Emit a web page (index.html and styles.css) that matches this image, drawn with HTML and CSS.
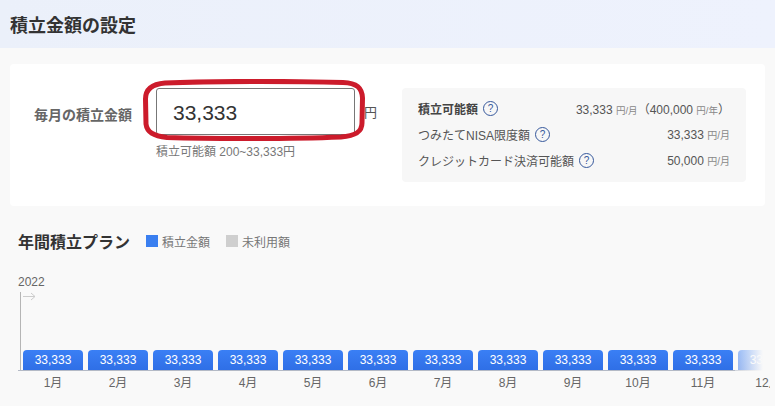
FILE: index.html
```html
<!DOCTYPE html>
<html lang="ja">
<head>
  <meta charset="UTF-8" />
  <title>積立金額の設定</title>
  <link rel="stylesheet" href="styles.css">
</head>
<body>

<header class="page-head">
  <h1>積立金額の設定</h1>
</header>

<section class="card">
  <div class="amount-label">毎月の積立金額</div>

  <div class="amount-field">
    <div class="input-row">
      <input class="amount-input" type="text" value="33,333" />
      <span class="yen">円</span>
    </div>
    <div class="hint">積立可能額 200~33,333円</div>
    <svg class="red-mark" width="226" height="68" viewBox="0 0 226 68">
      <path d="M24 4 C70 2 150 2 202 3.500 C216 4 221 9 221.500 19 L221 44 C221 53 214 57 200 58 C150 60 70 60 26 58.500 C12 57 6 53 5 45 L4.500 20 C4.500 10 12 5 24 4 Z" />
    </svg>
  </div>

  <div class="limits">
    <div class="limit-row limit-main">
      <div class="limit-name"><b>積立可能額</b><span class="help">?</span></div>
      <div class="limit-value value-main">33,333 <small>円/月</small>（400,000 <small>円/年</small>）</div>
    </div>
    <div class="limit-row">
      <div class="limit-name">つみたてNISA限度額<span class="help">?</span></div>
      <div class="limit-value">33,333 <small>円/月</small></div>
    </div>
    <div class="limit-row">
      <div class="limit-name">クレジットカード決済可能額<span class="help">?</span></div>
      <div class="limit-value">50,000 <small>円/月</small></div>
    </div>
  </div>
</section>

<section class="plan">
  <div class="plan-head">
    <h2>年間積立プラン</h2>
    <span class="legend"><i class="swatch swatch-blue"></i>積立金額</span>
    <span class="legend"><i class="swatch swatch-gray"></i>未利用額</span>
  </div>

  <div class="year">2022</div>

  <div class="chart">
    <svg class="arrow" width="13" height="9" viewBox="0 0 13 9">
      <path d="M0 4.500 H12 M8 1 L12 4.500 L8 8" />
    </svg>
    <div class="bars">
      <div class="bar">33,333</div>
      <div class="bar">33,333</div>
      <div class="bar">33,333</div>
      <div class="bar">33,333</div>
      <div class="bar">33,333</div>
      <div class="bar">33,333</div>
      <div class="bar">33,333</div>
      <div class="bar">33,333</div>
      <div class="bar">33,333</div>
      <div class="bar">33,333</div>
      <div class="bar">33,333</div>
      <div class="bar">33,333</div>
    </div>
    <div class="months">
      <div>1月</div>
      <div>2月</div>
      <div>3月</div>
      <div>4月</div>
      <div>5月</div>
      <div>6月</div>
      <div>7月</div>
      <div>8月</div>
      <div>9月</div>
      <div>10月</div>
      <div>11月</div>
      <div>12月</div>
    </div>
    <div class="fade"></div>
  </div>
</section>

</body>
</html>
```

FILE: styles.css
```css
* {
  box-sizing: border-box;
}
html, body {
  margin: 0;
  padding: 0;
  height: 100%;
  overflow: hidden;
}
body {
  background: #f9f9f9;
  color: #333;
  font-family: "Liberation Sans", "Noto Sans CJK JP", sans-serif;
}

.page-head {
  height: 48px;
  padding-left: 10px;
  display: flex;
  align-items: center;
  background: linear-gradient(90deg, #ebf0fa, #eef2fd);
}
h1 {
  margin: 0;
  font-size: 18px;
  font-weight: 700;
  color: #333;
}

.card {
  display: flex;
  align-items: flex-start;
  height: 142px;
  margin: 16px 10px 0;
  padding-top: 24px;
  background: #fff;
  border-radius: 4px;
}
.amount-label {
  width: 146px;
  margin-top: 16px;
  padding-left: 24px;
  font-size: 14px;
  font-weight: 700;
  color: #666;
  white-space: nowrap;
}
.amount-field {
  position: relative;
  width: 246px;
}
.input-row {
  display: flex;
  align-items: center;
}
.amount-input {
  width: 199px;
  height: 47px;
  padding: 3px 16px 0;
  border: 1px solid #777;
  border-radius: 3px;
  background: #fff;
  color: #333;
  font-family: inherit;
  font-size: 21px;
}
.yen {
  margin-left: 9px;
  font-size: 13px;
  color: #555;
}
.hint {
  margin-top: 7px;
  font-size: 12px;
  color: #777;
}
.red-mark {
  position: absolute;
  left: -15px;
  top: -9px;
}
.red-mark path {
  fill: none;
  stroke: #cc1b2b;
  stroke-width: 5;
}

.limits {
  width: 344px;
  height: 94px;
  padding: 7px 16px 0;
  background: #f7f7f7;
  border-radius: 4px;
}
.limit-row {
  display: flex;
  justify-content: space-between;
  align-items: center;
  height: 26px;
  font-size: 12px;
  color: #555;
}
.limit-main b {
  color: #444;
}
.limit-name {
  display: flex;
  align-items: center;
  white-space: nowrap;
}
.help {
  display: inline-flex;
  justify-content: center;
  align-items: center;
  width: 15px;
  height: 15px;
  margin-left: 5px;
  border: 1px solid #36589c;
  border-radius: 50%;
  font-size: 10px;
  font-weight: 400;
  color: #36589c;
}
.limit-value {
  font-size: 12px;
  white-space: nowrap;
}
.limit-value small {
  font-size: 10px;
  color: #888;
}
.value-main small {
  font-size: 9.500px;
}

.plan {
  padding: 24px 0 0 18px;
}
.plan-head {
  display: flex;
  align-items: center;
  height: 22px;
}
h2 {
  margin: 0 16px 0 0;
  font-size: 16px;
  font-weight: 700;
  color: #333;
}
.legend {
  display: flex;
  align-items: center;
  margin-right: 16px;
  font-size: 12px;
  color: #777;
}
.swatch {
  width: 12px;
  height: 12px;
  margin-right: 4px;
}
.swatch-blue {
  background: #3a7ff0;
}
.swatch-gray {
  background: #cfcfcf;
}
.year {
  margin-top: 23px;
  height: 14px;
  line-height: 14px;
  font-size: 12px;
  color: #666;
}

.chart {
  position: relative;
  margin-top: 3px;
  width: 752px;
  overflow: hidden;
}
.arrow {
  position: absolute;
  left: 5px;
  top: 0;
}
.arrow path {
  fill: none;
  stroke: #ccc;
  stroke-width: 1;
}
.bars {
  display: flex;
  gap: 5px;
  height: 79px;
  padding-left: 5px;
  align-items: flex-end;
  border-bottom: 1px solid #b4bac6;
  background: linear-gradient(#b5b5b5, #b5b5b5) 2px 0 / 1px 100% no-repeat;
}
.bar {
  flex: 0 0 60px;
  height: 20px;
  border-radius: 4px 4px 0 0;
  background: linear-gradient(#3a7ff5, #2f6fe6);
  color: #fff;
  font-size: 12px;
  line-height: 20px;
  text-align: center;
}
.months {
  display: flex;
  gap: 5px;
  padding: 5px 0 0 5px;
}
.months div {
  flex: 0 0 60px;
  font-size: 12px;
  line-height: 14px;
  color: #666;
  text-align: center;
}
.fade {
  position: absolute;
  right: 0;
  top: 0;
  width: 35px;
  height: 79px;
  background: linear-gradient(90deg, rgba(249,249,249,0.45), #f9f9f9 80%);
}
```
